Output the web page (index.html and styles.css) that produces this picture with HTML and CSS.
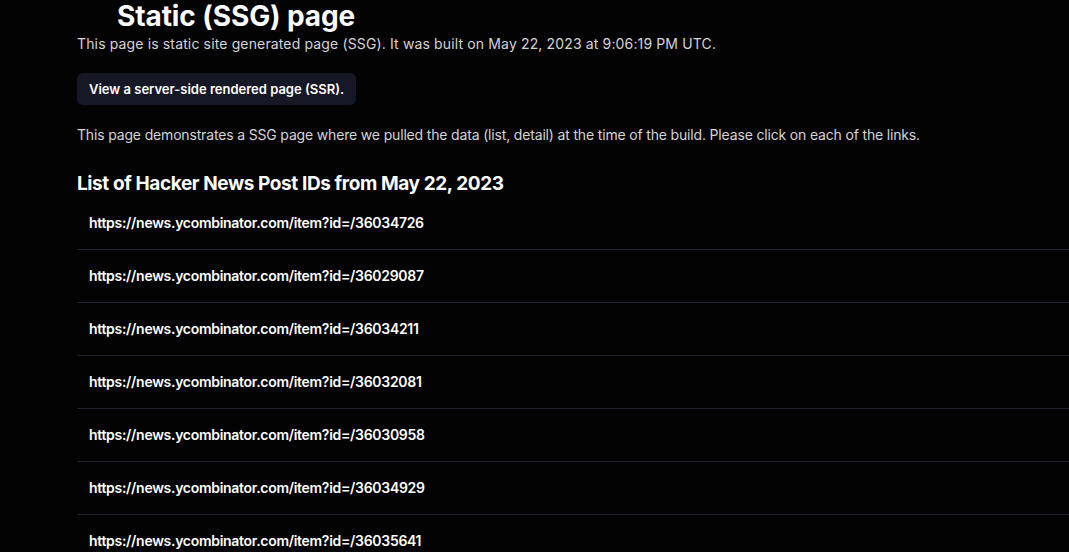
FILE: index.html
```html
<!DOCTYPE html>
<html>
<head>
<meta charset="utf-8">
<link rel="stylesheet" href="styles.css">
</head>
<body>
<main class="page">
  <h1 class="title">Static (SSG) page</h1>
  <p class="sub">This page is static site generated page (SSG). It was built on May 22, 2023 at 9:06:19 PM UTC.</p>
  <a class="btn" href="#">View a server-side rendered page (SSR).</a>
  <p class="desc">This page demonstrates a SSG page where we pulled the data (list, detail) at the time of the build. Please click on each of the links.</p>
  <h2 class="heading">List of Hacker News Post IDs from May 22, 2023</h2>
  <ul class="list">
    <li><a href="#">https://news.ycombinator.com/item?id=/36034726</a></li>
    <li><a href="#">https://news.ycombinator.com/item?id=/36029087</a></li>
    <li><a href="#">https://news.ycombinator.com/item?id=/36034211</a></li>
    <li><a href="#">https://news.ycombinator.com/item?id=/36032081</a></li>
    <li><a href="#">https://news.ycombinator.com/item?id=/36030958</a></li>
    <li><a href="#">https://news.ycombinator.com/item?id=/36034929</a></li>
    <li><a href="#">https://news.ycombinator.com/item?id=/36035641</a></li>
  </ul>
</main>
</body>
</html>
```
FILE: styles.css
```css
html, body {
  margin: 0;
  padding: 0;
  background: #030303;
  color: #fff;
  font-family: Inter, "Liberation Sans", sans-serif;
}
.page {
  padding-left: 77px;
}
.title {
  margin: 0;
  padding-left: 40px;
  font-size: 28px;
  line-height: 32px;
  font-weight: 700;
  letter-spacing: -0.1px;
}
.sub {
  margin: 2px 0 0;
  font-size: 14px;
  line-height: 20px;
  color: #d4d4d8;
  letter-spacing: 0.14px;
}
.btn {
  display: inline-block;
  margin-top: 19px;
  padding: 6px 12px;
  background: #171826;
  color: #fff;
  border-radius: 6px;
  font-size: 13px;
  line-height: 20px;
  font-weight: 600;
  letter-spacing: 0;
  text-decoration: none;
}
.desc {
  margin: 20px 0 0;
  font-size: 14px;
  line-height: 20px;
  color: #d4d4d8;
  letter-spacing: -0.165px;
}
.heading {
  margin: 25px 0 0;
  font-size: 19px;
  line-height: 27px;
  font-weight: 700;
  letter-spacing: -0.4px;
}
.list {
  list-style: none;
  margin: 0;
  padding: 0;
}
.list li {
  padding: 16px 12px;
  border-bottom: 1px solid #1f2030;
  font-size: 14px;
  line-height: 20px;
  font-weight: 600;
  letter-spacing: -0.3px;
}
.list li:last-child {
  padding-bottom: 0;
  border-bottom: none;
}
.list a {
  color: #fff;
  text-decoration: none;
}
```
